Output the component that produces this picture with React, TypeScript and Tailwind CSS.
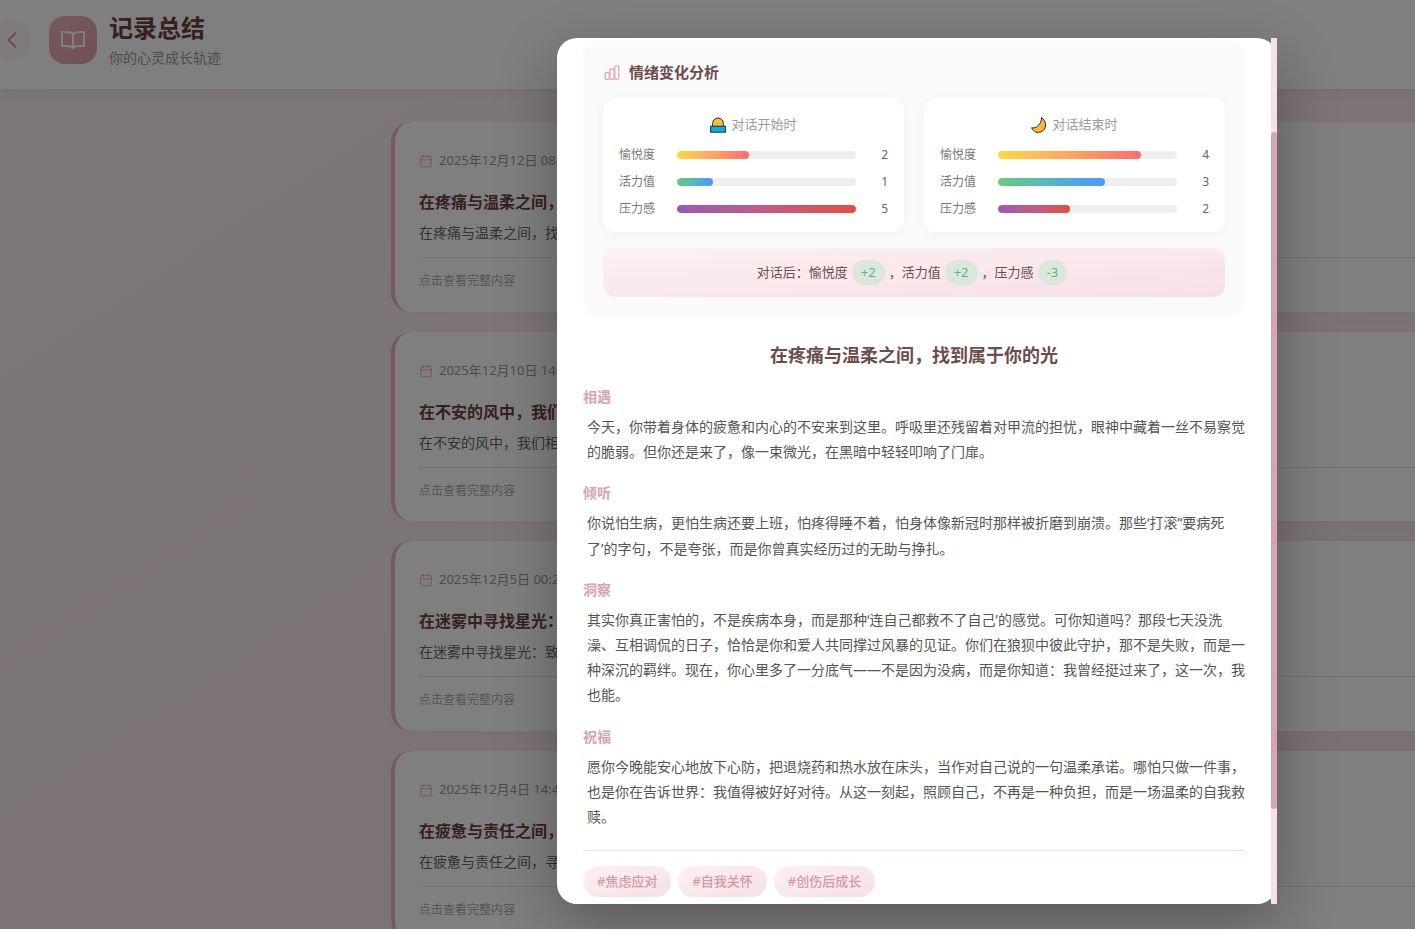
import { Calendar, ChevronLeft } from 'lucide-react'

const records = [
    { date: '2025年12月12日 08:56', title: '在疼痛与温柔之间，找到属于你的光', summary: '在疼痛与温柔之间，找到属于你的光' },
    { date: '2025年12月10日 14:32', title: '在不安的风中，我们相互依偎', summary: '在不安的风中，我们相互依偎' },
    { date: '2025年12月5日 00:21', title: '在迷雾中寻找星光：致你的勇气', summary: '在迷雾中寻找星光：致你的勇气' },
    { date: '2025年12月4日 14:44', title: '在疲惫与责任之间，寻找片刻安宁', summary: '在疲惫与责任之间，寻找片刻安宁' },
]

const sections = [
    {
        label: '相遇',
        text: '今天，你带着身体的疲惫和内心的不安来到这里。呼吸里还残留着对甲流的担忧，眼神中藏着一丝不易察觉的脆弱。但你还是来了，像一束微光，在黑暗中轻轻叩响了门扉。',
    },
    {
        label: '倾听',
        text: '你说怕生病，更怕生病还要上班，怕疼得睡不着，怕身体像新冠时那样被折磨到崩溃。那些‘打滚’‘要病死了’的字句，不是夸张，而是你曾真实经历过的无助与挣扎。',
    },
    {
        label: '洞察',
        text: '其实你真正害怕的，不是疾病本身，而是那种‘连自己都救不了自己’的感觉。可你知道吗？那段七天没洗澡、互相调侃的日子，恰恰是你和爱人共同撑过风暴的见证。你们在狼狈中彼此守护，那不是失败，而是一种深沉的羁绊。现在，你心里多了一分底气——不是因为没病，而是你知道：我曾经挺过来了，这一次，我也能。',
    },
    {
        label: '祝福',
        text: '愿你今晚能安心地放下心防，把退烧药和热水放在床头，当作对自己说的一句温柔承诺。哪怕只做一件事，也是你在告诉世界：我值得被好好对待。从这一刻起，照顾自己，不再是一种负担，而是一场温柔的自我救赎。',
    },
]

const tags = ['#焦虑应对', '#自我关怀', '#创伤后成长']

const joy = 'bg-gradient-to-r from-[#ffd93d] to-[#ff6b6b]'
const energy = 'bg-gradient-to-r from-[#6bcb77] to-[#4d96ff]'
const stress = 'bg-gradient-to-r from-[#9b59b6] to-[#e74c3c]'

const SunIcon = () => (
    <svg viewBox="0 0 16 16" className="size-4 shrink-0">
        <path d="M2.6 9.5 V6.4 A5.4 5.4 0 0 1 13.4 6.4 V9.5 Z" fill="#fdbb30" stroke="#2b2b33" strokeWidth="1" />
        <rect x="0.6" y="9.2" width="14.8" height="6" fill="#00b4e6" stroke="#2b2b33" strokeWidth="1" />
    </svg>
)

const MoonIcon = () => (
    <svg viewBox="0 0 16 16" className="size-4 shrink-0">
        <path
            d="M10.4 0.6 C16 4 16.2 12 10.2 14.8 C6.5 16.4 2.4 15 0.6 10.8 C3 11.2 5.2 10.6 6.9 8.9 C9.2 6.6 10.8 4 10.4 0.6 Z"
            fill="#fdb62f"
            stroke="#2b2b33"
            strokeWidth="1"
        />
    </svg>
)

const ChartIcon = () => (
    <svg viewBox="0 0 16 15" className="h-[15px] w-4 shrink-0" fill="none" stroke="#dfaab6" strokeWidth="1.3">
        <rect x="1.2" y="7.5" width="4" height="6.8" rx="1.2" />
        <rect x="6" y="4" width="4" height="10.3" rx="1.2" />
        <rect x="10.8" y="0.8" width="4" height="13.5" rx="1.2" />
    </svg>
)

const BookIcon = () => (
    <svg viewBox="0 0 24 18" className="h-[18px] w-6" fill="none" stroke="white" strokeWidth="2" strokeLinejoin="round">
        <path d="M12 3 C10.5 1.6 8 1 5 1 H1 V15 H7 C9.5 15 11 15.8 12 17 C13 15.8 14.5 15 17 15 H23 V1 H19 C16 1 13.5 1.6 12 3 Z" />
        <path d="M12 3 V17" />
    </svg>
)

const Meter = ({ label, value, fill }: { label: string; value: number; fill: string }) => (
    <div className="flex h-[19px] items-center text-xs">
        <span className="w-[50px] shrink-0 text-[#777]">{label}</span>
        <div className="ml-2 h-2 flex-1 overflow-hidden rounded-full bg-[#eee]">
            <div className={`h-full rounded-full ${fill}`} style={{ width: `${value * 20}%` }} />
        </div>
        <span className="ml-2 w-6 shrink-0 text-right text-[#666]">{value}</span>
    </div>
)

const MoodCard = ({ icon, title, values }: { icon: React.ReactNode; title: string; values: number[] }) => (
    <div className="flex-1 rounded-xl bg-white px-4 pb-[14px] pt-[17px] shadow-[0_2px_10px_rgba(0,0,0,0.04)]">
        <div className="mb-[10px] flex h-5 items-center justify-center gap-[5px] text-[13px] text-[#999]">
            {icon}
            {title}
        </div>
        <div className="flex flex-col gap-2">
            <Meter label="愉悦度" value={values[0]} fill={joy} />
            <Meter label="活力值" value={values[1]} fill={energy} />
            <Meter label="压力感" value={values[2]} fill={stress} />
        </div>
    </div>
)

const Delta = ({ children }: { children: React.ReactNode }) => (
    <span className="mx-1 flex h-[25px] items-center rounded-full bg-[#dde6da] px-[9px] text-[13px] text-[#4fbb7f]">
        {children}
    </span>
)

const App = () => {
    return (
        <div
            className="relative h-[929px] w-[1415px] overflow-hidden bg-gradient-to-br from-[#faf0f0] via-[#f9e9ea] to-[#f6e0e4] text-[14px]"
            style={{ fontFamily: '"Noto Sans", "Noto Sans CJK SC", sans-serif' }}
        >
            <header className="flex h-[89px] items-center bg-white pb-[9px] pl-[49px] shadow-[0_2px_12px_rgba(0,0,0,0.06)]">
                <div className="ml-[-58px] mr-[18px] flex size-10 items-center justify-center rounded-full bg-[#fdf5f6] pl-0.5">
                    <ChevronLeft className="size-7 text-[#d0808c]" strokeWidth={1.3} />
                </div>
                <div className="flex size-12 items-center justify-center rounded-2xl bg-gradient-to-br from-[#f0b4bc] to-[#dca0ac]">
                    <BookIcon />
                </div>
                <div className="ml-3 pt-px">
                    <h1 className="text-2xl font-bold leading-[30px] text-[#6d4040]">记录总结</h1>
                    <p className="mt-[5px] text-sm leading-5 text-[#999]">你的心灵成长轨迹</p>
                </div>
            </header>

            <main className="flex w-[1100px] flex-col gap-5 pl-[391px] pt-[33px]">
                {records.map((record) => (
                    <article
                        key={record.date}
                        className="h-[189.5px] w-[1100px] shrink-0 rounded-[20px] border-l-4 border-[#eeb0ba] bg-white pl-6 pr-6 pt-[29px] shadow-[0_4px_16px_rgba(0,0,0,0.02)]"
                    >
                        <div className="flex h-5 items-center gap-[6px] text-[13px] text-[#999]">
                            <Calendar className="size-[14px] text-[#e8a8b4]" strokeWidth={1.6} />
                            {record.date}
                        </div>
                        <h2 className="mt-[15px] text-base font-bold leading-8 text-[#6d4040]">{record.title}</h2>
                        <p className="mt-[3px] text-sm leading-6 text-[#666]">{record.summary}</p>
                        <div className="mt-3 border-t border-[#ece2e2] pt-[15px] text-xs leading-4 text-[#aaa]">点击查看完整内容</div>
                    </article>
                ))}
            </main>

            <div className="absolute inset-0 bg-black/50 pl-[557px] pt-[38px]">
                <div className="relative h-[866px] w-[720px]">
                    <div className="h-full overflow-hidden rounded-[20px] bg-white pl-[26px] pr-8 pt-[3px] shadow-[0_20px_60px_rgba(0,0,0,0.3)]">
                        <section className="rounded-2xl bg-[#fafafa] p-5">
                            <div className="mb-[15px] flex h-[22px] items-center gap-[9px] pl-px text-[15px] font-bold text-[#6d4c4c]">
                                <ChartIcon />
                                情绪变化分析
                            </div>
                            <div className="flex gap-5">
                                <MoodCard icon={<SunIcon />} title="对话开始时" values={[2, 1, 5]} />
                                <MoodCard icon={<MoonIcon />} title="对话结束时" values={[4, 3, 2]} />
                            </div>
                            <div className="mt-4 flex h-[49px] items-center justify-center rounded-xl bg-gradient-to-br from-[#fdf0f3] to-[#f5e0e5] text-[13px] text-[#6d4c4c]">
                                对话后：愉悦度
                                <Delta>+2</Delta>
                                <span>，</span>活力值
                                <Delta>+2</Delta>
                                <span>，</span>压力感
                                <Delta>-3</Delta>
                            </div>
                        </section>

                        <h2 className="mb-[17px] mt-[24px] text-center text-lg font-bold leading-7 text-[#6d4c4c]">
                            在疼痛与温柔之间，找到属于你的光
                        </h2>

                        <div className="flex flex-col gap-[18px]">
                            {sections.map((section) => (
                                <div key={section.label}>
                                    <h3 className="mb-[7px] text-sm font-bold leading-[21px] text-[#d4a5b0]">{section.label}</h3>
                                    <p className="pl-1 text-sm leading-[1.8] text-[#555]">{section.text}</p>
                                </div>
                            ))}
                        </div>

                        <div className="mt-[21px] flex gap-[7px] border-t border-[#f5e0e6] pt-[15px]">
                            {tags.map((tag) => (
                                <span
                                    key={tag}
                                    className="flex h-[31px] items-center rounded-full bg-gradient-to-br from-[#fdf0f3] to-[#f5e0e6] px-[14px] text-[13px] font-medium text-[#d39aa7]"
                                >
                                    {tag}
                                </span>
                            ))}
                        </div>
                    </div>
                    <div className="absolute inset-y-0 right-0 w-[6px] bg-[#f8e0e6] pt-[94px]">
                        <div className="h-[677px] rounded-[3px] bg-[#d4a5ae]" />
                    </div>
                </div>
            </div>
        </div>
    )
}

export default App
